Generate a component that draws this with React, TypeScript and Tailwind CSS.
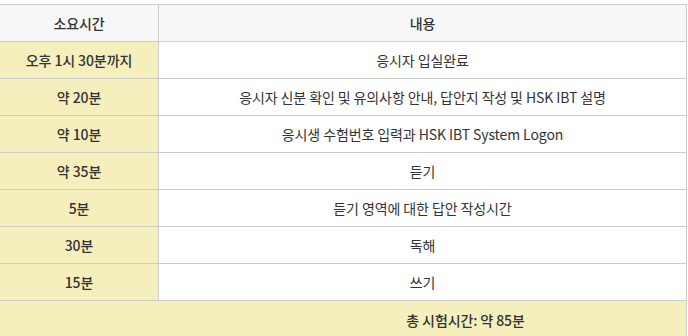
const rows: [string, string][] = [
  ['오후 1시 30분까지', '응시자 입실완료'],
  ['약 20분', '응시자 신분 확인 및 유의사항 안내, 답안지 작성 및 HSK IBT 설명'],
  ['약 10분', '응시생 수험번호 입력과 HSK IBT System Logon'],
  ['약 35분', '듣기'],
  ['5분', '듣기 영역에 대한 답안 작성시간'],
  ['30분', '독해'],
  ['15분', '쓰기'],
]

export default function App() {
  return (
    <div
      className="w-[688px] h-[336px] overflow-hidden bg-white pt-[4px] text-[14px] tracking-[-0.1px] text-[#333]"
      style={{ fontFamily: '"Noto Sans CJK KR", "Noto Sans", sans-serif' }}
    >
      <div className="w-[687px] border-r border-[#ccc]">
        <div className="flex h-[37px] border-t border-[#ccc] bg-[#f7f7f7] font-medium">
          <div className="w-[159px] border-r border-[#ccc] flex items-center justify-center">소요시간</div>
          <div className="flex-1 flex items-center justify-center">내용</div>
        </div>
        {rows.map(([time, desc]) => (
          <div key={time} className="flex h-[37px] border-t border-[#ccc]">
            <div className="w-[159px] border-r border-[#ccc] bg-[#f5efbd] font-medium flex items-center justify-center">
              {time}
            </div>
            <div className="flex-1 flex items-center justify-center">{desc}</div>
          </div>
        ))}
        <div className="flex h-[40px] border-t border-[#ccc] bg-[#f5efbd] font-medium items-center justify-center pl-[245px]">
          총 시험시간: 약 85분
        </div>
      </div>
    </div>
  )
}
